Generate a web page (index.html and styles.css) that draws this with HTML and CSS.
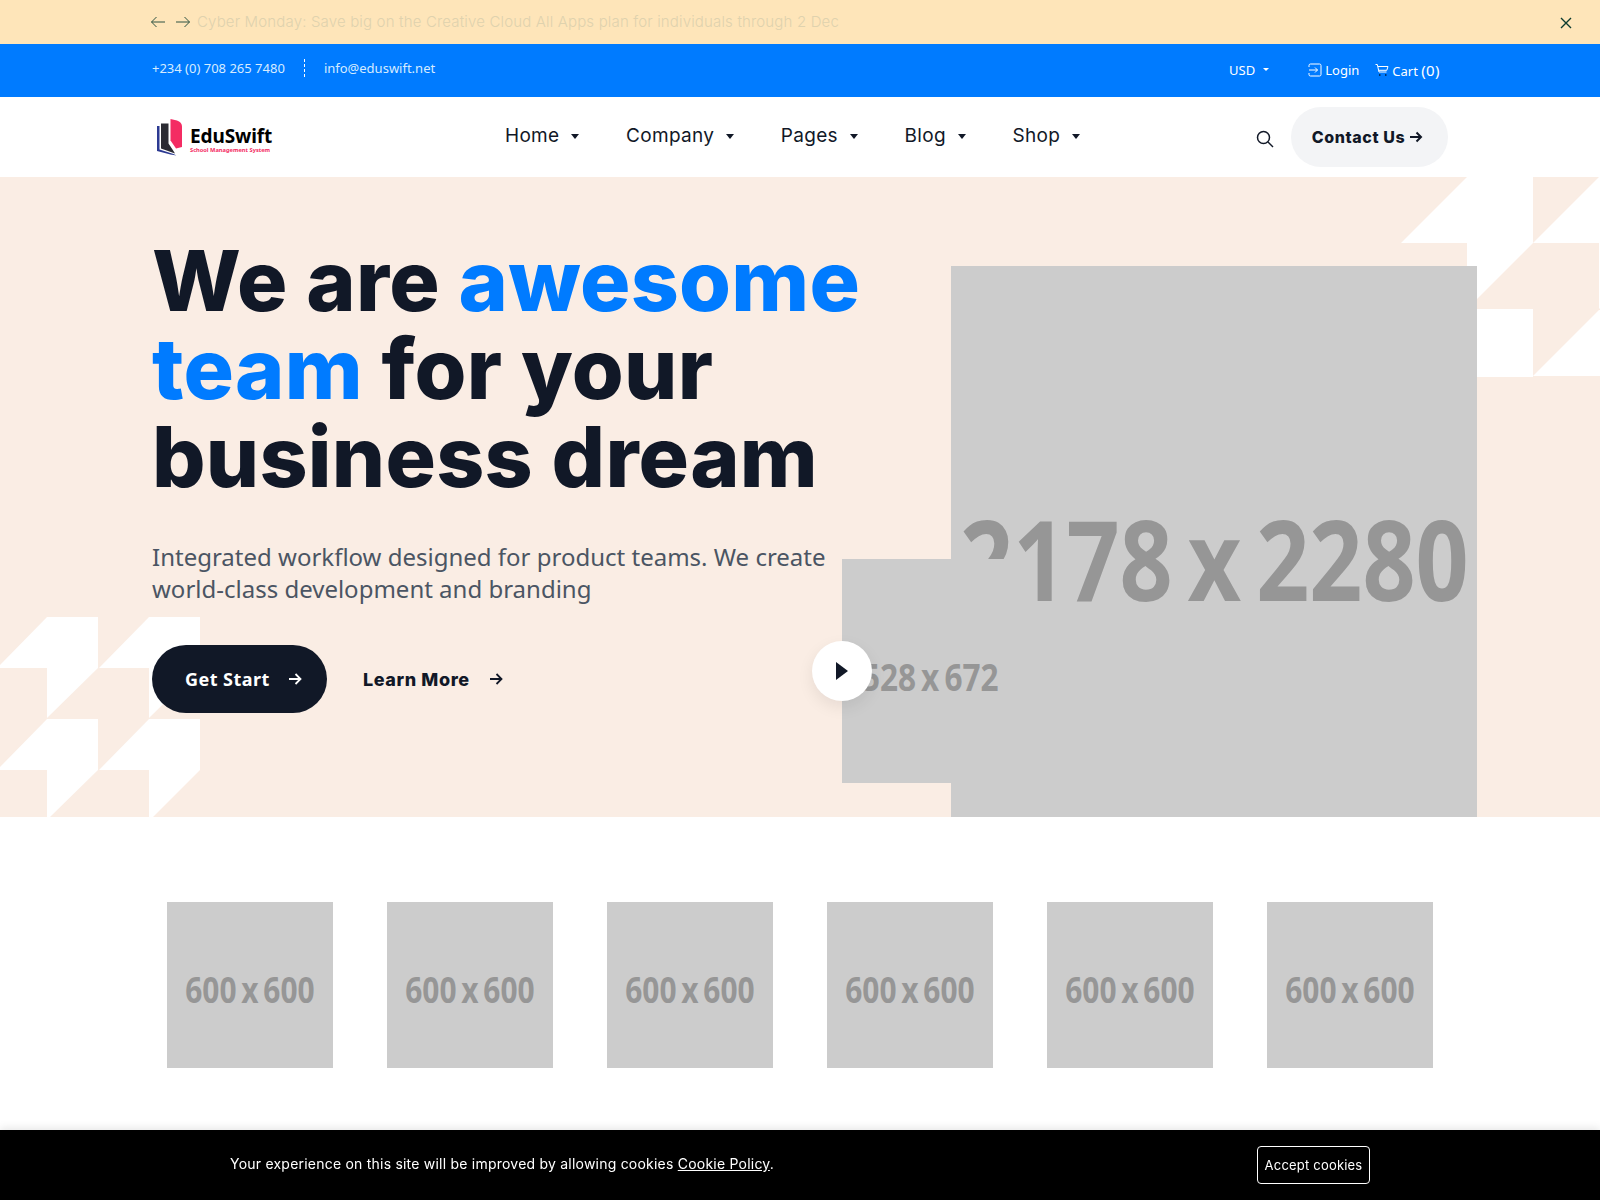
FILE: index.html
```html
<!DOCTYPE html>
<html>
<head>
  <title>EduSwift</title>
  <link rel="stylesheet" href="styles.css">
</head>
<body>
  <div class="notice">
    <div class="container notice-row">
      <div class="notice-arrows">
        <svg width="16" height="16" viewBox="0 0 16 16"><path d="M15 8H1.5M6.5 3 1.5 8l5 5"/></svg>
        <svg width="16" height="16" viewBox="0 0 16 16"><path d="M1 8h13.5M9.5 3l5 5-5 5"/></svg>
      </div>
      <p class="notice-text">Cyber Monday: Save big on the Creative Cloud All Apps plan for individuals through 2 Dec</p>
    </div>
    <svg class="notice-close" width="12" height="12" viewBox="0 0 12 12"><path d="M1 1l10 10M11 1 1 11"/></svg>
  </div>

  <div class="topbar">
    <div class="container topbar-row">
      <div class="contact-info">
        <span>+234 (0) 708 265 7480</span>
        <span class="divider"></span>
        <span>info@eduswift.net</span>
      </div>
      <div class="account">
        <span class="currency">USD <i class="caret caret-small"></i></span>
        <span class="account-link login">
          <svg width="14" height="14" viewBox="0 0 14 14"><path d="M1 4V2.500A1.500 1.500 0 0 1 2.500 1h9A1.500 1.500 0 0 1 13 2.500v9a1.500 1.500 0 0 1-1.500 1.500h-9A1.500 1.500 0 0 1 1 11.500V10M1 7h8.500M7 4.500 9.500 7 7 9.500"/></svg>
          Login
        </span>
        <span class="account-link">
          <svg width="14" height="14" viewBox="0 0 14 14"><path d="M.5 1.500h1.800l1.700 7.500h7.500M3 3.500h10l-1.200 3.800H3.800"/><circle cx="4.800" cy="12" r=".8"/><circle cx="10.800" cy="12" r=".8"/></svg>
          <span>Cart <span class="cart-count">(0)</span></span>
        </span>
      </div>
    </div>
  </div>

  <header class="navbar">
    <div class="container navbar-row">
      <a class="logo" href="#">
        <svg width="25" height="37" viewBox="0 0 25 37">
          <path class="book-blue" d="M0 7h2.500v23.500l14 4.500 3 1.500-6-1L0 32z"/>
          <path class="book-dark" d="M4 4.500h7.500v20l5 7.500 1.500 2.500-14-5z"/>
          <path class="book-pink" d="M13.500 0 20 1.500c3 1 5 3 5 6V28l-6 1.500-5.500-8z"/>
        </svg>
        <span class="logo-text">
          <span class="logo-name">EduSwift</span>
          <span class="logo-sub">School Management System</span>
        </span>
      </a>
      <nav class="menu">
        <a href="#">Home <i class="caret"></i></a>
        <a href="#">Company <i class="caret"></i></a>
        <a href="#">Pages <i class="caret"></i></a>
        <a href="#">Blog <i class="caret"></i></a>
        <a href="#">Shop <i class="caret"></i></a>
      </nav>
      <div class="nav-actions">
        <svg class="search-icon" width="18" height="18" viewBox="0 0 18 18"><circle cx="7.500" cy="7.500" r="6"/><path d="M12 12l5 5"/></svg>
        <a class="contact-btn" href="#">Contact Us
          <svg width="14" height="14" viewBox="0 0 14 14"><path d="M1 7h11M7.500 2.500 12 7l-4.500 4.500"/></svg>
        </a>
      </div>
    </div>
  </header>

  <section class="hero">
    <svg class="shape shape-top" width="200" height="200" viewBox="0 0 200 200">
      <polygon points="0,66 66,0 132,0 132,66 66,132 66,66"/>
      <polygon points="132,66 198,0 264,0 264,66 198,132 198,66"/>
      <polygon points="66,132 132,132 132,200 66,200"/>
      <polygon points="132,199 198,133 200,133 200,199"/>
    </svg>
    <svg class="shape shape-bottom" width="200" height="200" viewBox="0 0 200 200">
      <polygon points="0,48 47,0 98,0 98,51 47,101 47,51 0,51"/>
      <polygon points="99,51 149,0 200,0 200,51 149,101 149,51"/>
      <polygon points="0,150 47,102 98,102 98,153 50,200 47,200 47,153 0,153"/>
      <polygon points="99,153 149,102 200,102 200,153 153,200 149,200 149,153"/>
    </svg>
    <div class="container hero-row">
      <div class="hero-copy">
        <h1>We are <span class="accent">awesome</span> <span class="accent">team</span> for your business dream</h1>
        <p>Integrated workflow designed for product teams. We create world-class development and branding</p>
        <div class="hero-actions">
          <a class="btn-start" href="#">Get Start
            <svg width="16" height="16" viewBox="0 0 16 16"><path d="M2 8h11.500M8.500 3 13.500 8l-5 5"/></svg>
          </a>
          <a class="btn-more" href="#">Learn More
            <svg width="16" height="16" viewBox="0 0 16 16"><path d="M2 8h11.500M8.500 3 13.500 8l-5 5"/></svg>
          </a>
        </div>
      </div>
      <div class="hero-media">
        <div class="placeholder big-img"><span>2178 x 2280</span></div>
        <div class="placeholder small-img"><span>528 x 672</span></div>
        <button class="play-btn">
          <svg width="12" height="18" viewBox="0 0 12 18"><path d="M0 0l12 9-12 9z"/></svg>
        </button>
      </div>
    </div>
  </section>

  <section class="partners">
    <div class="placeholder partner"><span>600 x 600</span></div>
    <div class="placeholder partner"><span>600 x 600</span></div>
    <div class="placeholder partner"><span>600 x 600</span></div>
    <div class="placeholder partner"><span>600 x 600</span></div>
    <div class="placeholder partner"><span>600 x 600</span></div>
    <div class="placeholder partner"><span>600 x 600</span></div>
  </section>

  <div class="cookie-bar">
    <p>Your experience on this site will be improved by allowing cookies <a href="#">Cookie Policy</a>.</p>
    <button class="cookie-btn">Accept cookies</button>
  </div>
</body>
</html>
```

FILE: styles.css
```css
:root {
  --blue: #007bff;
  --dark: #111827;
  --peach: #faede4;
  --head-font: Inter, "Liberation Sans", sans-serif;
  --body-font: "Noto Sans", "Open Sans", sans-serif;
}

* {
  box-sizing: border-box;
}

body {
  margin: 0;
  font-family: var(--body-font);
  color: var(--dark);
  background: #fff;
}

a {
  color: inherit;
  text-decoration: none;
}

p {
  margin: 0;
}

svg path {
  fill: none;
  stroke: currentColor;
}

.container {
  width: 1320px;
  margin: 0 auto;
  padding: 0 12px;
}

/* Notice strip */
.notice {
  position: relative;
  height: 44px;
  background: #fee5b9;
  color: #0c3b2e;
}
.notice-row {
  display: flex;
  align-items: center;
  height: 100%;
  gap: 6px;
}
.notice-arrows {
  display: flex;
  gap: 9px;
  margin-left: -2px;
  opacity: .85;
}
.notice-text {
  margin-top: -2px;
  font-family: var(--head-font);
  font-size: 15px;
  font-weight: 300;
  letter-spacing: .16px;
  color: #dfd2ae;
  white-space: nowrap;
}
.notice-close {
  position: absolute;
  top: 17px;
  right: 28px;
}
.notice-close path {
  stroke-width: 1.4;
}

/* Blue top bar */
.topbar {
  height: 53px;
  background: var(--blue);
  color: #fff;
  font-size: 13px;
}
.topbar-row {
  display: flex;
  justify-content: space-between;
  align-items: center;
  height: 100%;
}
.contact-info {
  display: flex;
  align-items: center;
  gap: 19px;
  color: #d6ebff;
  margin-top: -6px;
}
.divider {
  height: 18px;
  border-left: 1px dashed #fff;
}
.account {
  display: flex;
  align-items: center;
  margin-top: -2px;
  padding-right: 8px;
}
.currency {
  display: flex;
  align-items: center;
  gap: 8px;
  margin-right: 39px;
}
.account-link {
  display: flex;
  align-items: center;
  gap: 3px;
}
.login {
  margin-right: 16px;
}
.cart-count {
  font-size: 15px;
  letter-spacing: .4px;
}

.caret {
  display: inline-block;
  width: 0;
  height: 0;
  margin-left: 6px;
  vertical-align: 3px;
  border-top: 5px solid currentColor;
  border-left: 4.500px solid transparent;
  border-right: 4.500px solid transparent;
}
.caret-small {
  margin-left: 0;
  vertical-align: 0;
  border-top-width: 3.500px;
  border-left-width: 3.500px;
  border-right-width: 3.500px;
}

/* Main nav */
.navbar {
  height: 80px;
}
.navbar-row {
  display: flex;
  align-items: center;
  height: 100%;
}
.logo {
  display: flex;
  align-items: center;
  gap: 8px;
  width: 353px;
  padding-left: 5px;
}
.book-blue {
  fill: #2c3a92;
  stroke: none;
}
.book-dark {
  fill: #2b2b33;
  stroke: none;
}
.book-pink {
  fill: #f42c63;
  stroke: none;
}
.logo-text {
  display: flex;
  flex-direction: column;
  margin-top: 6px;
}
.logo-name {
  font-size: 19px;
  font-weight: 700;
  line-height: 21px;
  letter-spacing: -.1px;
  color: #000;
}
.logo-sub {
  font-size: 5.700px;
  font-weight: 700;
  line-height: 7px;
  color: #f42c63;
}
.menu {
  display: flex;
  gap: 47px;
  margin-top: -3px;
  font-family: var(--head-font);
  font-size: 19px;
  letter-spacing: .3px;
}
.nav-actions {
  display: flex;
  align-items: center;
  gap: 17px;
  margin-left: auto;
}
.search-icon {
  fill: none;
  stroke: var(--dark);
  stroke-width: 1.500;
  margin-top: 3px;
}
.contact-btn {
  display: flex;
  align-items: center;
  justify-content: center;
  gap: 4px;
  width: 157px;
  height: 60px;
  padding: 0 4px 1px 0;
  border-radius: 30px;
  background: #f3f4f6;
  font-family: var(--head-font);
  font-size: 16px;
  font-weight: 800;
  letter-spacing: .6px;
}
.contact-btn path {
  stroke-width: 2;
}

/* Hero */
.hero {
  position: relative;
  height: 640px;
  overflow: hidden;
  background: var(--peach);
}
.shape {
  position: absolute;
  fill: #fff;
}
.shape-top {
  top: 0;
  right: -1px;
}
.shape-bottom {
  left: 0;
  bottom: 0;
}
.hero-row {
  position: relative;
  display: flex;
  justify-content: space-between;
  height: 100%;
}
.hero-copy {
  width: 720px;
  padding-top: 60px;
}
h1 {
  margin: 0;
  font-family: var(--head-font);
  font-size: 84px;
  font-weight: 800;
  line-height: 88px;
  letter-spacing: .25px;
}
.accent {
  color: var(--blue);
}
.hero-copy p {
  margin-top: 40px;
  font-size: 24px;
  line-height: 32px;
  color: #4b5563;
}
.hero-actions {
  display: flex;
  align-items: center;
  gap: 36px;
  margin-top: 40px;
}
.btn-start {
  display: flex;
  align-items: center;
  gap: 17px;
  width: 175px;
  height: 68px;
  padding-left: 33px;
  border-radius: 34px;
  background: var(--dark);
  color: #fff;
  font-size: 18px;
  font-weight: 700;
  letter-spacing: .45px;
}
.btn-more {
  display: flex;
  align-items: center;
  gap: 18px;
  font-family: var(--head-font);
  font-size: 18px;
  font-weight: 800;
  letter-spacing: .6px;
}
.btn-start path,
.btn-more path {
  stroke-width: 1.800;
}

.hero-media {
  position: relative;
  width: 526px;
  margin-right: -29px;
  padding-top: 89px;
}

/* Placeholder images, text stays centred */
.placeholder {
  display: flex;
  align-items: center;
  justify-content: center;
  overflow: hidden;
  background: #ccc;
  color: #969696;
  font-family: "Open Sans", sans-serif;
  font-weight: 700;
  word-spacing: -.1em;
  white-space: nowrap;
}
.placeholder span {
  display: block;
  transform: scaleX(.83);
}
.big-img {
  height: 551px;
  padding-top: 32px;
  font-size: 112px;
}
.small-img {
  position: absolute;
  top: 382px;
  left: -109px;
  width: 176px;
  height: 224px;
  padding-top: 10px;
  font-size: 38px;
}
.play-btn {
  position: absolute;
  top: 464px;
  left: -139px;
  display: flex;
  align-items: center;
  justify-content: center;
  width: 60px;
  height: 60px;
  padding: 0;
  border: none;
  border-radius: 50%;
  background: #fff;
  box-shadow: 0 6px 16px rgba(0, 0, 0, .08);
}
.play-btn path {
  fill: var(--dark);
  stroke: none;
}

/* Partner logos */
.partners {
  display: flex;
  justify-content: center;
  gap: 54px;
  padding: 85px 0 70px;
}
.partner {
  width: 166px;
  height: 166px;
  padding-top: 8px;
  font-size: 36px;
}

/* Cookie bar */
.cookie-bar {
  position: fixed;
  left: 0;
  right: 0;
  bottom: 0;
  display: flex;
  align-items: center;
  justify-content: space-between;
  height: 70px;
  padding: 0 230px;
  background: #000;
  color: #fff;
  font-family: var(--head-font);
  font-size: 14px;
  letter-spacing: .22px;
  box-shadow: 0 -2px 8px rgba(0, 0, 0, .1);
}
.cookie-bar p {
  padding-bottom: 3px;
}
.cookie-bar a {
  text-decoration: underline;
}
.cookie-btn {
  width: 113px;
  height: 38px;
  padding: 0;
  border: 1px solid #fff;
  border-radius: 4px;
  background: transparent;
  color: #fff;
  font-family: var(--head-font);
  font-size: 13px;
  letter-spacing: .2px;
}
```
